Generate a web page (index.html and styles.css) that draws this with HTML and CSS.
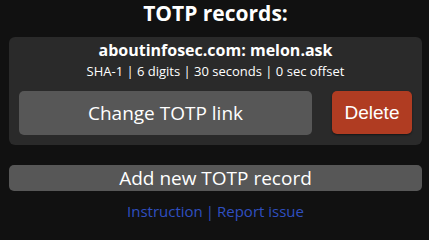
FILE: index.html
```html
<!DOCTYPE html>
<html>
<head>
<meta charset="utf-8">
<link rel="stylesheet" href="styles.css">
</head>
<body>
<h2 class="title">TOTP records:</h2>
<div class="card">
  <div class="card-name">aboutinfosec.com: melon.ask</div>
  <div class="card-meta">SHA-1 | 6 digits | 30 seconds | 0 sec offset</div>
  <div class="card-actions">
    <button class="btn btn-change">Change TOTP link</button>
    <button class="btn btn-delete">Delete</button>
  </div>
</div>
<button class="btn btn-add">Add new TOTP record</button>
<div class="links"><a href="#">Instruction</a><span class="sep">|</span><a href="#">Report issue</a></div>
</body>
</html>
```
FILE: styles.css
```css
html, body {
  margin: 0;
  padding: 0;
  background: #111111;
  color: #ffffff;
  font-family: "Open Sans", "Noto Sans", sans-serif;
}
body {
  padding: 0 7px 0 9px;
}
.title {
  margin: 0;
  height: 27px;
  line-height: 27px;
  font-size: 21px;
  font-weight: 700;
  text-align: center;
}
.card {
  margin-top: 10px;
  background: #2a2a2a;
  border-radius: 6px;
  padding: 2px 10px 10px 10px;
  display: flex;
  flex-direction: column;
  align-items: center;
}
.card-name {
  font-weight: 700;
  font-size: 16px;
  line-height: 22px;
}
.card-meta {
  font-size: 13px;
  line-height: 20px;
}
.card-actions {
  align-self: stretch;
  display: flex;
  gap: 20px;
  margin-top: 10px;
}
.btn {
  border: none;
  color: #ffffff;
  border-radius: 5px;
  cursor: pointer;
}
.btn-change {
  flex: 1;
  height: 44px;
  background: #575757;
  font-family: "Open Sans", "Noto Sans", sans-serif;
  font-size: 19px;
}
.btn-delete {
  width: 80px;
  height: 43px;
  background: #b03c22;
  font-family: "Liberation Sans", Arial, sans-serif;
  font-size: 19px;
  box-shadow: 0 1px 2px rgba(0, 0, 0, 0.5);
}
.btn-add {
  display: block;
  width: 100%;
  margin-top: 20px;
  height: 26px;
  background: #575757;
  font-family: "Open Sans", "Noto Sans", sans-serif;
  font-size: 19px;
  line-height: 26px;
  padding: 0;
}
.links {
  margin-top: 9px;
  text-align: center;
  font-size: 15px;
  line-height: 22px;
  color: #2f4fc0;
}
.links .sep {
  margin: 0 3px;
}
.links a {
  color: #2f4fc0;
  text-decoration: none;
}
```
